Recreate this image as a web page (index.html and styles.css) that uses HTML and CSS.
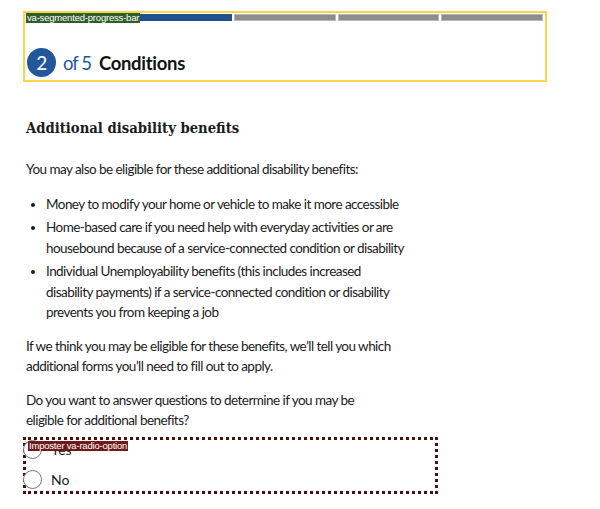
FILE: index.html
```html
<!DOCTYPE html>
<html lang="en">
<head>
<meta charset="utf-8">
<link rel="stylesheet" href="styles.css">
<title>Conditions</title>
</head>
<body>
<main class="page">
  <section class="progress">
    <div class="segments">
      <span class="seg done"></span>
      <span class="seg done"></span>
      <span class="seg"></span>
      <span class="seg"></span>
      <span class="seg"></span>
    </div>
    <span class="tag tag-green">va-segmented-progress-bar</span>
    <h2 class="step">
      <span class="step-num">2</span>
      <span class="step-of">of 5</span>
      <span class="step-title">Conditions</span>
    </h2>
  </section>

  <h3 class="heading">Additional disability benefits</h3>
  <p class="text">You may also be eligible for these additional disability benefits:</p>
  <ul class="list">
    <li>Money to modify your home or vehicle to make it more accessible</li>
    <li>Home-based care if you need help with everyday activities or are housebound because of a service-connected condition or disability</li>
    <li>Individual Unemployability benefits (this includes increased disability payments) if a service-connected condition or disability prevents you from keeping a job</li>
  </ul>
  <p class="text after-list">If we think you may be eligible for these benefits, we’ll tell you which additional forms you’ll need to fill out to apply.</p>
  <p class="text question">Do you want to answer questions to determine if you may be eligible for additional benefits?</p>

  <div class="radios">
    <span class="tag tag-red">Imposter va-radio-option</span>
    <label class="radio"><span class="circle"></span><span>Yes</span></label>
    <label class="radio"><span class="circle"></span><span>No</span></label>
  </div>
</main>
</body>
</html>
```

FILE: styles.css
```css
* { box-sizing: border-box; }
html, body { margin: 0; padding: 0; background: #fff; }
body {
  font-family: "Lato", "Liberation Sans", sans-serif;
  color: #1b1b1b;
  font-size: 13.5px;
  letter-spacing: -0.55px;
}
.page {
  padding: 11px 0 0 23px;
  width: 547px;
}
.progress {
  position: relative;
  border: 2px solid #fad449;
  height: 71px;
  padding: 1px 2px 0 2px;
}
.segments {
  display: flex;
  gap: 2px;
  height: 7px;
}
.seg {
  flex: 1;
  background: #8d8d8d;
  border: 1px solid #b9b9b9;
}
.seg.done {
  background: #21508f;
  border-color: #21508f;
}
.tag {
  position: absolute;
  font-family: "Liberation Sans", sans-serif;
  font-size: 9.5px;
  line-height: 10px;
  color: #fff;
  padding: 0 1px;
  letter-spacing: -0.2px;
  z-index: 1;
}
.tag-green {
  top: 0;
  left: 1px;
  background: #2f5e2c;
}
.tag-red {
  top: 1px;
  left: 2px;
  background: #6e1a1a;
}
.step {
  display: flex;
  align-items: center;
  margin: 27px 0 0 0;
  font-weight: normal;
  font-size: 18.5px;
  letter-spacing: -0.3px;
}
.step-num {
  width: 29px;
  height: 29px;
  border-radius: 50%;
  background: #22579a;
  color: #fff;
  display: flex;
  align-items: center;
  justify-content: center;
  font-size: 19px;
  margin-right: 7px;
}
.step-of {
  color: #22579a;
  margin-right: 8px;
  letter-spacing: -1px;
}
.step-title {
  font-weight: bold;
  color: #111;
}
.heading {
  font-family: "DejaVu Serif Condensed", "DejaVu Serif", serif;
  font-size: 14.7px;
  font-weight: bold;
  letter-spacing: 0;
  color: #1b1b1b;
  margin: 37px 0 0 3px;
}
.text {
  margin: 23px 0 0 3px;
  line-height: 20.5px;
  width: 400px;
}
.list {
  margin: 14px 0 0 3px;
  padding-left: 20px;
  line-height: 20.5px;
  width: 382px;
}
.list li { margin-top: 3px; }
.list li:first-child { margin-top: 0; }
.text.after-list { margin-top: 13px; }
.text.question { width: 355px; margin-top: 13px; }
.radios {
  position: relative;
  margin-top: 6px;
  width: 415px;
  border: 3px dotted #4a1010;
  padding: 0;
  display: flex;
  flex-direction: column;
  gap: 7px;
}
.radio {
  display: flex;
  align-items: center;
  height: 23px;
  gap: 9px;
  letter-spacing: 0;
  font-size: 14px;
}
.radio:first-of-type { margin-top: -2px; }
.circle {
  width: 19px;
  height: 19px;
  border: 1px solid #777;
  border-radius: 50%;
  background: #fff;
  margin-left: -3px;
}
```
